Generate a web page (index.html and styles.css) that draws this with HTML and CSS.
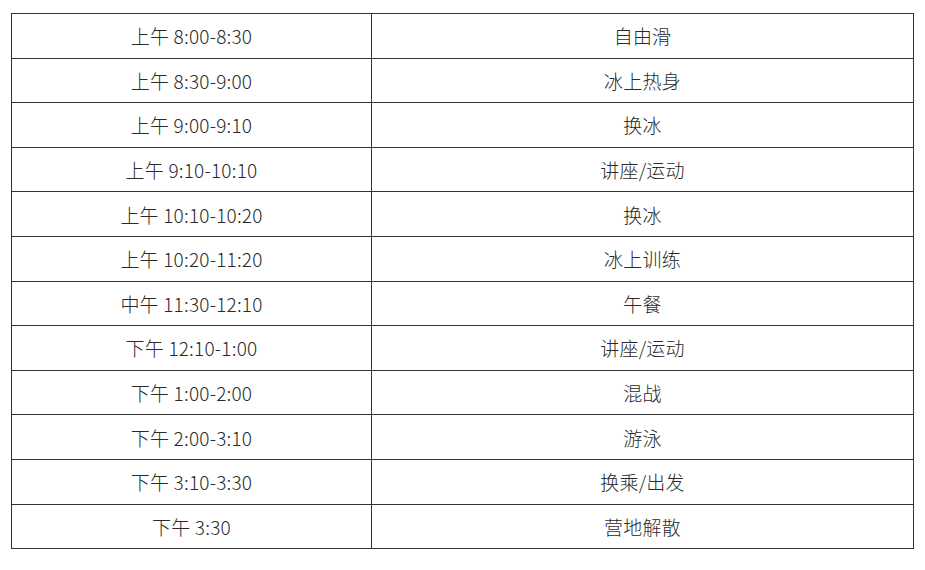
FILE: index.html
```html
<!DOCTYPE html>
<html lang="zh-CN">
<head>
<meta charset="utf-8">
<title>日程表</title>
<link rel="stylesheet" href="styles.css">
</head>
<body>
<table class="schedule">
  <colgroup><col class="c-time"><col class="c-act"></colgroup>
  <tbody>
    <tr><td>上午 8:00-8:30</td><td>自由滑</td></tr>
    <tr><td>上午 8:30-9:00</td><td>冰上热身</td></tr>
    <tr><td>上午 9:00-9:10</td><td>换冰</td></tr>
    <tr><td>上午 9:10-10:10</td><td>讲座/运动</td></tr>
    <tr><td>上午 10:10-10:20</td><td>换冰</td></tr>
    <tr><td>上午 10:20-11:20</td><td>冰上训练</td></tr>
    <tr><td>中午 11:30-12:10</td><td>午餐</td></tr>
    <tr><td>下午 12:10-1:00</td><td>讲座/运动</td></tr>
    <tr><td>下午 1:00-2:00</td><td>混战</td></tr>
    <tr><td>下午 2:00-3:10</td><td>游泳</td></tr>
    <tr><td>下午 3:10-3:30</td><td>换乘/出发</td></tr>
    <tr><td>下午 3:30</td><td>营地解散</td></tr>
  </tbody>
</table>
</body>
</html>
```

FILE: styles.css
```css
html, body {
  margin: 0;
  padding: 0;
  background: #fff;
}
body {
  padding: 13px 0 0 11px;
  font-family: "Noto Sans CJK SC", "Noto Sans", sans-serif;
  color: #2a2a2a;
}
.schedule {
  border-collapse: collapse;
  width: 902px;
  table-layout: fixed;
}
.c-time { width: 360px; }
.c-act { width: 542px; }
.schedule td {
  border: 1px solid #333;
  height: 43.6px;
  padding: 0;
  text-align: center;
  vertical-align: middle;
  font-size: 19px;
  font-weight: 300;
  letter-spacing: 0.2px;
  line-height: 1;
}
```
